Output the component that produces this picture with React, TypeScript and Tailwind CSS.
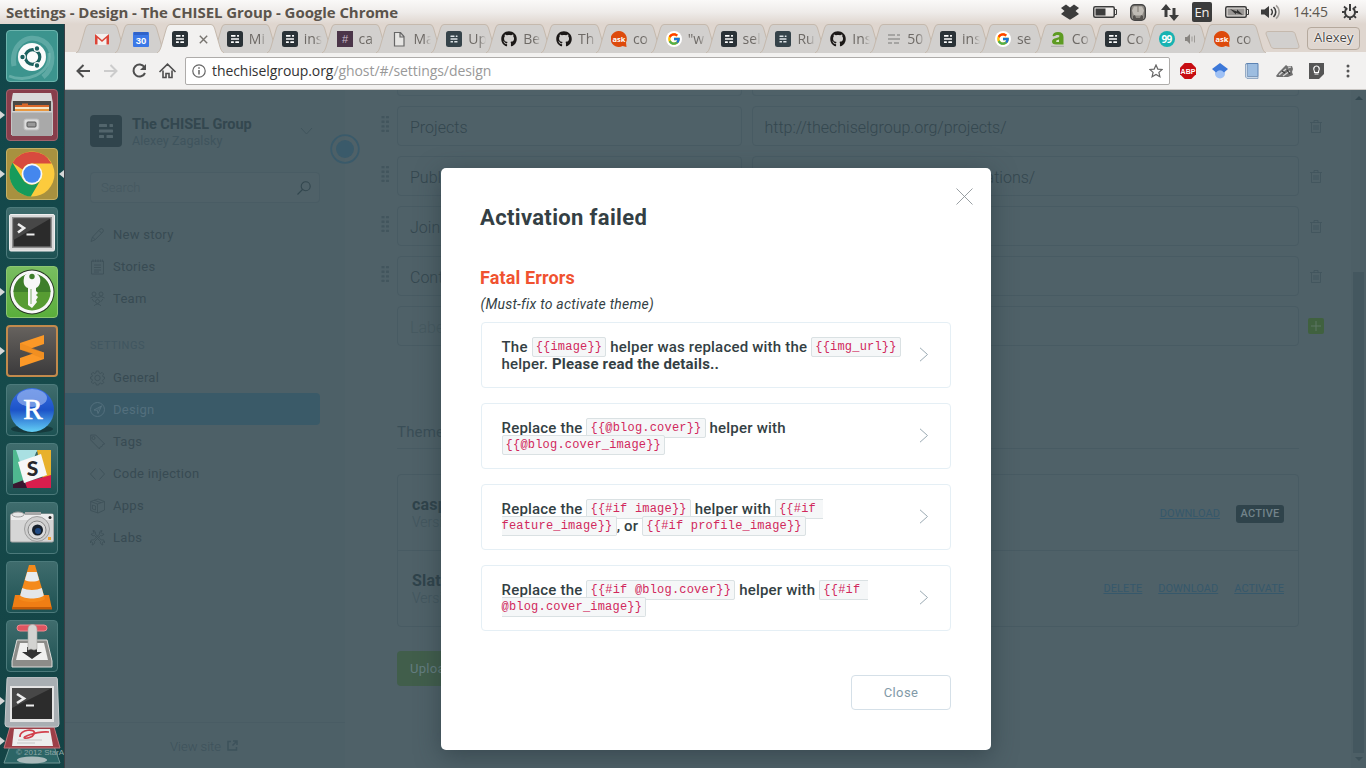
import React from 'react';
import { FaGithub } from 'react-icons/fa';
import { FcGoogle } from 'react-icons/fc';

type Kids = { children?: React.ReactNode };

/* ---------- Small shared glyphs ---------- */

function GhostMark({ size, bg, fg, r = 4, zoom = 1 }: { size: number; bg: string; fg: string; r?: number; zoom?: number }) {
  return (
    <svg width={size} height={size} viewBox="0 0 32 32">
      <rect width="32" height="32" rx={r} fill={bg} />
      <g fill={fg} transform={`translate(16 16) scale(${zoom}) translate(-16 -16)`}>
        <rect x="9" y="9" width="8" height="3" rx="0.6" />
        <rect x="19.5" y="9" width="3.5" height="3" rx="0.6" />
        <rect x="9" y="14.5" width="14" height="3" rx="0.6" />
        <rect x="9" y="20" width="5" height="3" rx="0.6" />
        <rect x="16.500" y="20" width="6.500" height="3" rx="0.6" />
      </g>
    </svg>
  );
}

/* ---------- System menu bar ---------- */

function SystemBar() {
  return (
    <header className="flex h-6 shrink-0 items-center justify-between bg-linear-to-b from-[#faf9f8] via-[#efecea] to-[#dfd6cf] pr-2 pl-1.5 font-['Open_Sans','Noto_Sans',sans-serif]">
      <h1 className="text-[15px] leading-6 font-bold tracking-[-0.07px] whitespace-nowrap text-[#5b544c]">
        Settings - Design - The CHISEL Group - Google Chrome
      </h1>
      <div className="flex items-center text-[#3c3c3c]">
        <svg width="18" height="16" viewBox="0 0 18 16" fill="#3c3c3c">
          <path d="M5 0.500 9 3.500 13 0.500 18 4 14.500 7 18 10 13.500 13 9 15.700 4.500 13 0 10 3.500 7 0 4z" />
        </svg>
        <svg className="ml-[14px]" width="24" height="12" viewBox="0 0 24 12">
          <rect x="0.750" y="0.750" width="20.500" height="10.500" rx="1.500" fill="none" stroke="#3c3c3c" strokeWidth="1.500" />
          <rect x="2.500" y="2.500" width="10" height="7" fill="#3c3c3c" />
          <path d="M22 3.500h1.500v5H22" fill="none" stroke="#3c3c3c" />
        </svg>
        <svg className="ml-[13px]" width="16" height="17" viewBox="0 0 16 17">
          <rect x="0.700" y="0.700" width="14.600" height="15.600" rx="4" fill="#8f8b85" stroke="#444" strokeWidth="1.400" />
          <path d="M4 2.500h8l2 4-2 5H4l-2-5z" fill="#bfbbb5" />
          <path d="M8 2v6" fill="none" stroke="#8b867f" strokeWidth="1.200" />
          <path d="M3 16v-4l2-1 1 3h4l1-3 2 1v4z" fill="#55524f" />
        </svg>
        <svg className="ml-[15px]" width="18" height="17" viewBox="0 0 18 17" fill="#3c3c3c">
          <path d="M5 0 10 6H6.500v7h-3V6H0zM13 17 8 11h3.500V4h3v7H18z" />
        </svg>
        <span className="ml-[13px] flex h-5 w-5 items-center justify-center rounded-[2px] bg-[#3c3c3c] text-[13px] leading-5 text-[#f3f0ed]">En</span>
        <svg className="ml-[13px]" width="24" height="12" viewBox="0 0 24 12">
          <rect x="0.750" y="0.750" width="20.500" height="10.500" rx="1.500" fill="#eeeae6" stroke="#3c3c3c" strokeWidth="1.500" />
          <rect x="2.500" y="2.500" width="17" height="7" fill="#9a9795" />
          <path d="M5 3 12 5.500V3.500l6 5.500-7-2v1.500z" fill="#333" />
          <path d="M22 3.500h1.500v5H22" fill="none" stroke="#3c3c3c" />
        </svg>
        <svg className="ml-[12px]" width="20" height="16" viewBox="0 0 20 16">
          <path d="M0 5.500h3.500L8 2v12l-4.500-3.500H0z" fill="#3c3c3c" />
          <path d="M10 5c1.700 1.700 1.700 4.300 0 6M12.500 3c3 2.700 3 7.300 0 10" fill="none" stroke="#3c3c3c" strokeWidth="1.600" />
          <path d="M15 1.300c4.200 3.500 4.200 9.900 0 13.400" fill="none" stroke="#a09c98" strokeWidth="1.500" />
        </svg>
        <span className="ml-[12px] w-9 text-[14px] leading-6 tracking-[-0.2px] text-[#5d5750]">14:45</span>
        <svg className="ml-[13px]" width="16" height="16" viewBox="0 0 16 16" fill="none" stroke="#3c3c3c">
          <path d="M5.300 4.200a5 5 0 1 0 5.400 0M8 0v7" strokeWidth="2" />
          <path d="M3.900 4.400 2 2.500M2.900 8H0M3.900 12 2 13.800M8 13.500V16M12.100 12l1.900 1.800M13.100 8H16M12.100 4.400 14 2.500" strokeWidth="1.800" />
        </svg>
      </div>
    </header>
  );
}

/* ---------- Launcher ---------- */

function Tile({ cls, children, left, right }: Kids & { cls: string; left?: boolean; right?: boolean }) {
  return (
    <li className="flex h-[52px] items-center">
      <span className="flex w-1.5">
        {left && <svg width="5" height="8" viewBox="0 0 5 8"><path d="M0 0 5 4 0 8z" fill="#d6d8d8" /></svg>}
      </span>
      <span className={`flex h-[52px] w-[52px] items-center justify-center overflow-hidden rounded-[4px] border ${cls}`}>
        {children}
      </span>
      <span className="flex w-1.5 justify-end">
        {right && <svg width="5" height="8" viewBox="0 0 5 8"><path d="M5 0 0 4l5 4z" fill="#d6d8d8" /></svg>}
      </span>
    </li>
  );
}

function TerminalIcon() {
  return (
    <svg width="46" height="38" viewBox="0 0 46 38">
      <rect x="0.500" y="0.500" width="45" height="36.500" rx="1.500" fill="#d9d9d9" stroke="#efefef" />
      <rect x="3" y="3" width="40" height="31" fill="#8d8d8d" />
      <rect x="4.500" y="4.500" width="37" height="28" fill="#2b2b2b" />
      <path d="M4.500 4.500h37L4.500 26z" fill="#474747" />
      <path d="M9 10l6 4-6 4.500" fill="none" stroke="#eee" strokeWidth="2.600" />
      <path d="M17.500 20.500h8" stroke="#eee" strokeWidth="2" />
    </svg>
  );
}

const glass = 'border-[#4c7a7b] bg-linear-to-b from-[#3f6c6d] to-[#1d5253]';

function Launcher() {
  return (
    <nav className="flex w-[65px] shrink-0 flex-col overflow-hidden border-r border-[#3b3f45] bg-linear-to-b from-[#12464a] via-[#164a4b] to-[#144345] pt-1.5">
      <ul className="flex flex-col gap-[7px]">
        <Tile cls="border-[#6db5ae] bg-[#3c948e]">
          <svg width="50" height="50" viewBox="0 0 50 50">
            <path d="M7 35C3 15 20 1 36 10c12 7 12 26 0 36" fill="none" stroke="#75b8b2" strokeWidth="5" opacity=".6" />
            <path d="M2 45C18 52 44 44 42 22" fill="none" stroke="#8cc5bf" strokeWidth="3" opacity=".5" />
            <circle cx="25" cy="26" r="14" fill="#fbfbfb" />
            <circle cx="25.500" cy="26" r="7.300" fill="none" stroke="#1c615f" strokeWidth="3.200" />
            <g fill="#1c615f" stroke="#fbfbfb" strokeWidth="1.200"><circle cx="15.500" cy="26" r="2.800" /><circle cx="30" cy="17.500" r="2.800" /><circle cx="30" cy="34.500" r="2.800" /></g>
          </svg>
        </Tile>
        <Tile left cls="border-[#a2636d] bg-[#883e4b]">
          <svg width="44" height="46" viewBox="0 0 44 46">
            <path d="M3 1h38l2 10v32H1V11z" fill="#c4c4c4" />
            <path d="M3 1h38l1 8H2z" fill="#dadada" />
            <rect x="3" y="9" width="38" height="14" fill="#4a4845" />
            <path d="M5 13h7v-1.500h6V13h21v10H5z" fill="#d9682a" />
            <path d="M5 15h34v2H5z" fill="#f5e6c8" /><path d="M5 17h34v2H5z" fill="#e9983f" />
            <path d="M2 19h40v25H2z" fill="#a9a9a9" /><path d="M2 19h40v1.500H2z" fill="#d2d2d2" />
            <rect x="14" y="27" width="15" height="11" rx="2" fill="#ddd" stroke="#bcbcbc" />
            <rect x="17" y="30" width="9" height="5" rx="1" fill="#999" stroke="#555" />
          </svg>
        </Tile>
        <Tile left right cls="border-[#c4b066] bg-[#a8913f]">
          <svg width="46" height="46" viewBox="0 0 46 46">
            <circle cx="23" cy="23" r="22.500" fill="#fccb3d" />
            <path d="M3.500 11.800A22.500 22.500 0 0 1 42.500 12.500H23a10.400 10.400 0 0 0-9.500 6z" fill="#d84a3e" />
            <path d="M3.500 11.800A22.500 22.500 0 0 0 21.800 45.500L32 28.300a10.400 10.400 0 0 1-18.500-.500z" fill="#179b5b" />
            <circle cx="23" cy="23" r="10.400" fill="#f6f8fb" />
            <circle cx="23" cy="23" r="8.700" fill="#4587ee" />
          </svg>
        </Tile>
        <Tile cls={glass}><TerminalIcon /></Tile>
        <Tile left cls="border-[#8cc671] bg-linear-to-b from-[#79bd60] to-[#5aae3b]">
          <svg width="46" height="46" viewBox="0 0 46 46">
            <circle cx="23" cy="23" r="22.500" fill="#263523" /><circle cx="23" cy="23" r="21.500" fill="#f8f8f8" />
            <circle cx="23" cy="23" r="18.500" fill="#579c32" /><path d="M4.500 23a18.500 18.500 0 0 1 37 0z" fill="#3e7e2a" />
            <path d="M15 9c0-4 5-5 5-5h6c5 2 6 6 5 10-1 3-2 4-4 5v3l2 2-2 2 2 2-2 3 1 2-5 6-4-3V19c-4-1-5-6-4-10z" fill="#f7f7f7" />
            <circle cx="23" cy="7.500" r="2.700" fill="#3e7e2a" /><path d="M22 20v15" stroke="#7fae6a" />
          </svg>
        </Tile>
        <Tile left cls="border-[#c28a4c] border-2 bg-linear-to-b from-[#66625e] to-[#3c3b3c]">
          <svg width="24" height="32" viewBox="0 0 24 32"><path d="M0 8 24 0v9L11 13.500l13 4V24L0 32v-9l13-4.500L0 14.500z" fill="#fb9827" /><path d="M0 14.500V8l24 9.500V24z" fill="#e8851c" opacity=".5" /></svg>
        </Tile>
        <Tile cls={glass}>
          <svg width="48" height="48" viewBox="0 0 48 48">
            <defs><linearGradient id="rball" x2="0" y2="1"><stop offset="0" stopColor="#3a6fe0" /><stop offset=".5" stopColor="#1c53c8" /><stop offset="1" stopColor="#63cff5" /></linearGradient></defs>
            <ellipse cx="24" cy="43" rx="21" ry="4" fill="#163a3d" />
            <circle cx="24" cy="24" r="22" fill="url(#rball)" /><ellipse cx="24" cy="12" rx="15" ry="9" fill="#9db9f0" opacity=".65" />
            <text x="25" y="33" textAnchor="middle" fontFamily="Liberation Serif, serif" fontSize="29" fill="#fff" stroke="#fff" strokeWidth=".6">R</text>
          </svg>
        </Tile>
        <Tile cls={glass}>
          <svg width="40" height="40" viewBox="0 0 40 40">
            <path d="M1 1h26l-13 9z" fill="#8ed9db" /><path d="M1 1h24l-3 8-15 4z" fill="#a9e0e2" /><path d="M25 1h14v27l-8 2z" fill="#e8b12c" />
            <path d="M1 1h3l12 36H1z" fill="#4fb890" /><path d="M39 26v13H12l2-6z" fill="#d91e4d" /><path d="M1 35l11-4 3 8H1z" fill="#3a1630" />
            <path d="M6 13 29 5l6 21-23 8z" fill="#f7f7f7" />
            <text x="20.500" y="27" textAnchor="middle" fontFamily="Lato, sans-serif" fontWeight="900" fontSize="21" fill="#28272b">S</text>
          </svg>
        </Tile>
        <Tile cls={glass}>
          <svg width="44" height="36" viewBox="0 0 44 36">
            <rect x="0.500" y="4" width="43" height="28" rx="1.500" fill="#d6d6d6" stroke="#a7a7a7" /><rect x="1" y="4" width="42" height="6" fill="#ececec" />
            <ellipse cx="8" cy="4.500" rx="6" ry="2.500" fill="#e6e6e6" stroke="#999" /><rect x="15" y="2" width="16" height="3" fill="#a8a8a8" />
            <circle cx="27" cy="19" r="12.500" fill="#cfcfcf" stroke="#9e9e9e" /><circle cx="27" cy="20" r="9" fill="#dadada" stroke="#888" />
            <circle cx="27.500" cy="20" r="5.500" fill="#16202c" /><circle cx="28" cy="21" r="3" fill="#214b85" />
            <rect x="38" y="27" width="3" height="3" fill="#f0a22e" /><circle cx="40" cy="7.500" r="1.500" fill="#222" />
          </svg>
        </Tile>
        <Tile cls={glass}>
          <svg width="42" height="46" viewBox="0 0 42 46">
            <path d="M4 31h34l3 14H1z" fill="#f07e14" /><path d="M1 43h40v2.500H1z" fill="#c45c08" />
            <path d="M18 1h6l10 34c-4 4-22 4-26 0z" fill="#f48a1b" />
            <path d="M16.200 8h9.600l2.400 8c-3 2-11 2-14.400 0z" fill="#e9ecee" /><path d="M11.200 24c5 2.500 14.500 2.500 19.600 0l2 7.500c-4 4-19.600 4-23.600 0z" fill="#e3e7ea" />
          </svg>
        </Tile>
        <Tile cls={glass}>
          <svg width="42" height="46" viewBox="0 0 42 46">
            <path d="M6 17h30l5 21v6H1v-6z" fill="#8c8c89" stroke="#dedddb" /><path d="M9 20h24l4 17H5z" fill="#f0f0ef" />
            <rect x="6" y="2" width="30" height="6" rx="3" fill="#df5560" stroke="#ef8990" />
            <path d="M16 24h10v5h5l-10 7-10-7h5z" fill="#333" />
            <path d="M17 6c0-6 9-6 9 0v20l-3 1-3-1-3 1z" fill="#d3d3d1" stroke="#a5a5a2" strokeWidth=".6" />
          </svg>
        </Tile>
      </ul>
      <svg className="mt-[5px] shrink-0" width="64" height="92" viewBox="0 0 64 92">
        <path d="M0 20 5 24 0 28zM0 60l5 4-5 4z" fill="#d6d8d8" />
        <path d="M10 69h44l6 17H4z" fill="#2c6566" stroke="#6f9695" /><ellipse cx="32" cy="83" rx="15" ry="3.500" fill="#a9babb" />
        <path d="M10 50h44l6 21H4z" fill="#9d3f47" stroke="#c2747b" />
        <path d="M14 52h36l3 17H12z" fill="#ededed" /><path d="M20 60c-1-8 17-9 14-3s-17 5-5 1 14-3 20-3" fill="none" stroke="#d2404c" strokeWidth="1.700" />
        <path d="M18 63h24M17 66h18" stroke="#c5c5c5" />
        <path d="M9 0h46q2 0 2.300 2L59 47q0 3-3 3H8q-3 0-3-3L7 2q0-2 2-2z" fill="#a9afb3" stroke="#c6cbcd" />
        <rect x="10" y="9" width="44" height="36" fill="#e4e4e4" /><rect x="12" y="11" width="40" height="31" fill="#2c2c2c" /><path d="M12 11h40L12 31z" fill="#474747" />
        <path d="M17 17l7 4.500-7 4.500" fill="none" stroke="#eee" strokeWidth="2.600" /><path d="M26 28.500h8" stroke="#eee" strokeWidth="2" />
        <text x="16" y="78" fontFamily="Liberation Sans, sans-serif" fontSize="8" fill="#8da5a7">© 2012 StarA</text>
      </svg>
    </nav>
  );
}

/* ---------- Browser tabs ---------- */

type Fav = 'gmail' | 'cal' | 'ghost' | 'ghost2' | 'hash' | 'file' | 'git' | 'ask' | 'google' | 'grey' | 'two' | 'nn';

function Favicon({ kind }: { kind: Fav }) {
  switch (kind) {
    case 'gmail':
      return <svg width="16" height="16" viewBox="0 0 16 16"><path d="M1 3h14v11H1z" fill="#f3f0ee" /><path d="M1 13.500V3l7 6 7-6v10.500h-2.500V7L8 11 3.500 7v6.500z" fill="#dc4437" /></svg>;
    case 'cal':
      return <svg width="16" height="16" viewBox="0 0 16 16"><rect y="1" width="16" height="15" rx="1" fill="#3b78e7" /><path d="M1 1h14v3H1z" fill="#2f62c9" /><text x="8" y="12.500" textAnchor="middle" fontFamily="Liberation Sans, sans-serif" fontWeight="700" fontSize="9.500" fill="#fff">30</text></svg>;
    case 'ghost':
      return <GhostMark size={16} bg="#2a3237" fg="#fff" r={5} zoom={1.15} />;
    case 'ghost2':
      return <GhostMark size={16} bg="#35434a" fg="#dfe5e8" r={5} />;
    case 'hash':
      return <svg width="16" height="16" viewBox="0 0 16 16"><rect width="16" height="16" fill="#4b3549" /><text x="8" y="12" textAnchor="middle" fontFamily="Liberation Sans, sans-serif" fontSize="11" fill="#c9bcc9">#</text></svg>;
    case 'file':
      return <svg width="16" height="16" viewBox="0 0 16 16"><path d="M3.500 1.500h6l3.500 4v9.500H3.500zM9 1.500V6h4" fill="#e6e5e3" stroke="#666" strokeWidth="1.200" /></svg>;
    case 'git':
      return <FaGithub size={16} color="#1b1817" />;
    case 'ask':
      return <svg width="16" height="16" viewBox="0 0 16 16"><path d="M8 0a8 8 0 1 0 3.500 15l4 1-.500-4.500A8 8 0 0 0 8 0z" fill="#dd4a0c" /><text x="8" y="10.600" textAnchor="middle" fontFamily="Open Sans, sans-serif" fontWeight="700" fontSize="7.500" fill="#fff">ask</text></svg>;
    case 'google':
      return <span className="flex h-4 w-4 items-center justify-center rounded-full bg-white"><FcGoogle size={14} /></span>;
    case 'grey':
      return <svg width="16" height="16" viewBox="0 0 16 16" fill="#a5a4a2"><path d="M3 3h7v2H3zM12 3h3v2h-3zM3 7h12v2H3zM3 11h4v2H3zM9 11h5v2H9z" /></svg>;
    case 'two':
      return <svg width="16" height="16" viewBox="0 0 16 16"><path d="M2.500 5Q3 1 8 1q5.500 0 5.500 5v7.500H6Q2 13.500 2 10.500T6.500 7Q9.500 6.500 9.500 5T6.500 4Q5 5.500 2.500 5z" fill="#5d9b22" /><path d="M6 10q0-1 3-1.500V11H7q-1 0-1-1z" fill="#d9e8c8" /><path d="M1 15.300h13" stroke="#aaa" /></svg>;
    case 'nn':
      return <svg width="16" height="16" viewBox="0 0 16 16"><circle cx="8" cy="8" r="8" fill="#17b3b2" /><text x="7.500" y="11.500" textAnchor="middle" fontFamily="Open Sans, sans-serif" fontWeight="700" fontSize="10" letterSpacing="-.8" fill="#fff">99</text></svg>;
  }
}

const tabs: { fav: Fav; label?: string; active?: boolean; sound?: boolean }[] = [
  { fav: 'ghost', active: true },
  { fav: 'ghost', label: 'Mi' },
  { fav: 'ghost', label: 'ins' },
  { fav: 'hash', label: 'ca' },
  { fav: 'file', label: 'Ma' },
  { fav: 'ghost2', label: 'Up' },
  { fav: 'git', label: 'Be' },
  { fav: 'git', label: 'Th' },
  { fav: 'ask', label: 'co' },
  { fav: 'google', label: '"w' },
  { fav: 'ghost', label: 'sel' },
  { fav: 'ghost2', label: 'Ru' },
  { fav: 'git', label: 'Ins' },
  { fav: 'grey', label: '50' },
  { fav: 'ghost', label: 'ins' },
  { fav: 'google', label: 'se' },
  { fav: 'two', label: 'Co' },
  { fav: 'ghost', label: 'Co' },
  { fav: 'nn', sound: true },
  { fav: 'ask', label: 'co' },
];

function TabShape({ w, active }: { w: number; active?: boolean }) {
  return (
    <svg className="absolute inset-0" width={w} height="29" viewBox={`0 0 ${w} 29`}>
      <path d={`M0 29C2 28 3 26 4 23L9.500 4Q10.500 0.500 13 .500H${w - 13}Q${w - 10.5} .500 ${w - 9.5} 4L${w - 4} 23C${w - 3} 26 ${w - 2} 28 ${w} 29`} fill={active ? '#f2f1f0' : '#d2d0ce'} stroke="#c5b9ad" />
    </svg>
  );
}

function TabStrip() {
  return (
    <div className="flex h-7 items-start bg-[#dfd6cf] pl-[11px] font-['Open_Sans','Noto_Sans',sans-serif]">
      {(['gmail', 'cal'] as Fav[]).map((f) => (
        <div key={f} className="relative -mr-3 flex h-7 w-[51px] shrink-0 items-center justify-center pt-0.5">
          <TabShape w={51} />
          <span className="relative"><Favicon kind={f} /></span>
        </div>
      ))}
      <div className="ml-[3px] flex">
        {tabs.map((t, i) => (
          <div key={i} className={`relative mr-[-12.15px] flex h-7 w-[67px] shrink-0 items-center pt-0.5 pl-[15px] ${t.active ? 'z-10' : ''}`}>
            <TabShape w={67} active={t.active} />
            <span className="relative flex h-4 w-4 shrink-0"><Favicon kind={t.fav} /></span>
            {t.active && (
              <svg className="relative ml-[11px]" width="9" height="9" viewBox="0 0 9 9"><path d="M.8.8l7.400 7.400M8.200.8.8 8.200" stroke="#77746f" strokeWidth="1.400" /></svg>
            )}
            {t.sound && (
              <svg className="relative ml-2.5" width="11" height="10" viewBox="0 0 11 10"><path d="M0 3h2l3-3v10L2 7H0z" fill="#888581" /><path d="M7 2.500v5M9.500 1.500v7" stroke="#9d9a96" /></svg>
            )}
            {t.label && (
              <span className="relative ml-1.5 w-[18px] overflow-hidden [mask-image:linear-gradient(to_right,#000_60%,transparent)] text-[14px] leading-5 whitespace-nowrap text-[#6e6a66]">{t.label}</span>
            )}
          </div>
        ))}
      </div>
      <svg className="mt-[7px] ml-[11px] shrink-0" width="35" height="18" viewBox="0 0 35 18"><path d="M3 .5h24q2 0 3 2l4 12.500q.5 2.500-2 2.500H9q-2 0-3-2L1 3Q.5.500 3 .500z" fill="#d2d0ce" stroke="#c5b9ad" /></svg>
      <div className="mt-[2.500px] ml-[7px] flex h-[23px] w-[53px] shrink-0 items-center justify-center rounded-[4px] border border-[#b5a99d] text-[13px] font-medium text-[#4a4744] [text-shadow:0_0_2px_#fff,0_0_2px_#fff,0_0_1px_#fff]">Alexey</div>
    </div>
  );
}

function Toolbar() {
  return (
    <div className="flex h-[38px] items-center border-b border-[#c9c6c3] bg-[#f2f1f0] pl-2.5">
      <svg width="106" height="18" viewBox="0 0 106 18" fill="none" strokeWidth="2">
        <path d="M15 9H3M8.500 3 2.500 9l6 6" stroke="#4e4e4e" />
        <path d="M29 9h12M35.500 3l6 6-6 6" stroke="#ccc" />
        <path d="M69.500 5.200A6 6 0 1 0 70 11" stroke="#4e4e4e" /><path d="M71 2v6h-6z" fill="#4e4e4e" stroke="none" />
        <path d="M88 8.500V15.500h3v-4h3v4h3V8.500M84.500 10 92.500 2.200l8 7.800" stroke="#4e4e4e" strokeWidth="1.600" />
      </svg>
      <div className="ml-1 flex h-7 w-[985px] items-center rounded-[2px] border border-[#aeacaa] bg-white pr-1.5 pl-1.5">
        <svg width="14" height="14" viewBox="0 0 14 14" fill="none" stroke="#666"><circle cx="7" cy="7" r="6.200" strokeWidth="1.200" /><path d="M7 6v4.500M7 3.200v1.500" strokeWidth="1.500" /></svg>
        <span className="ml-1.5 grow font-['Open_Sans','Noto_Sans',sans-serif] text-[14px] leading-6 tracking-[-0.07px] text-[#999]"><span className="text-[#333]">thechiselgroup.org</span>/ghost/#/settings/design</span>
        <svg width="14" height="14" viewBox="0 0 14 14"><path d="M7 1l1.800 4.100 4.400.4L9.900 8.400l1 4.300L7 10.400 3.100 12.700l1-4.300L.8 5.500l4.400-.4z" fill="none" stroke="#666" strokeWidth="1.200" /></svg>
      </div>
      <div className="ml-2.5 flex items-center gap-4">
        <svg width="16" height="16" viewBox="0 0 16 16"><path d="M4.700 0h6.600L16 4.700v6.600L11.300 16H4.700L0 11.300V4.700z" fill="#c70d12" /><text x="8" y="10.700" textAnchor="middle" fontFamily="Liberation Sans, sans-serif" fontWeight="700" fontSize="7" fill="#fff">ABP</text></svg>
        <svg width="16" height="16" viewBox="0 0 16 16"><circle cx="8" cy="10.500" r="5" fill="#9fc1f5" /><path d="M8 0 16 6l-4 3.500Q8 5 4 9.500L0 6z" fill="#3d78d8" /></svg>
        <svg width="16" height="16" viewBox="0 0 15 16"><path d="M2 .5h11.500v13H2z" fill="#9dbde0" stroke="#5c83b3" /><path d="M1 1v13l1.500 1.500h11v-2H3V1z" fill="#c9d8e8" stroke="#7592b5" strokeWidth=".7" /></svg>
        <svg width="17" height="14" viewBox="0 0 17 14"><path d="M0 12 3 8l5-5 2-2 2 1.500 4-.5 1 3-1 3 1 3-5 2H1z" fill="#6f6f6f" /><path d="M3 11l7-6M7 12l7-5M12 4l3-1" stroke="#d5d5d5" strokeWidth="1.300" /><path d="M6 7l3 2M11 6l3 4" stroke="#3a3a3a" strokeWidth="1.200" /></svg>
        <svg width="15" height="16" viewBox="0 0 15 16"><path d="M0 0h15v11l-5 5H0z" fill="#555" /><path d="M5.500 8.500c-2-3 0-5.500 2-5.500s4 2.500 2 5.500v1h-4zM5.500 11h4" fill="none" stroke="#fff" strokeWidth="1.200" /></svg>
        <svg width="16" height="16" viewBox="0 0 16 16" fill="#555"><circle cx="8" cy="3" r="1.500" /><circle cx="8" cy="8" r="1.500" /><circle cx="8" cy="13" r="1.500" /></svg>
      </div>
    </div>
  );
}

/* ---------- Ghost admin sidebar ---------- */

const icons: Record<string, React.ReactNode> = {
  'New story': <path d="M1 14.500 2.500 10 10 2.200Q11.500 1 12.800 2.200T12.800 5L5 12.800zM2.500 10 5 12.500M9 3.500l2.500 2.500" />,
  Stories: <path d="M1.500 2h12v13h-12zM4 6h7M4 8.500h7M4 11h7M4 13h5M3 .500V3M5.500 .500V3M8 .500V3M10.500 .500V3M12.500 .500V3" />,
  Team: <path d="M2 3a2 2 0 1 0 4 0 2 2 0 1 0-4 0M9 3a2 2 0 1 0 4 0 2 2 0 1 0-4 0M5.500 10.500a2 2 0 1 0 4 0 2 2 0 1 0-4 0M.5 7q3.500-3 7 0M7.500 7q3.500-3 7 0M4 14.800q3.500-3.500 7 0M2 8l2.500 3M13 8l-2.500 3" />,
  General: <path d="M6.300 1h2.400l.4 1.900 1.300.6L12.100 2.400l1.600 1.600-1.100 1.700.6 1.300 1.300.1v1.800l-1.300.6-.6 1.300 1.100 1.700-1.600 1.600-1.700-1.100-1.300.6L8.700 15H6.300l-.4-1.900-1.300-.6-1.700 1.100-1.600-1.600 1.100-1.700-.6-1.300-1.300-.3V7l1.300-.2.6-1.300L1.300 4l1.600-1.600 1.700 1.100 1.300-.6zM4.800 8a2.700 2.700 0 1 0 5.400 0 2.700 2.700 0 1 0-5.400 0" />,
  Design: <path d="M.5 7.500a7 7 0 1 0 14 0 7 7 0 1 0-14 0M11.500 4 4 8l3.200.3L8 11.500zM11.500 4 7.200 8.300" />,
  Tags: <path d="M.7 1h5l9 9-2 .5-.7 2-2 .5-.5 2-8.800-9zM3.500 2.500a1.500 1.500 0 1 0 0 3 1.500 1.500 0 1 0 0-3" />,
  'Code injection': <path d="M5.500 2.500 0.500 8l5 5.500M9.500 2.500l5 5.500-5 5.500" />,
  Apps: <path d="M.7 3.500 8 1l6.500 2.500v8.500L8 15 .7 12.500zM.7 3.500 7.500 6l7-2.500M7.500 6v9M4 2.200l7 2.500M2.500 7l3 1v4l-3-1z" />,
  Labs: <path d="M1 4c1 2 3 2 3.500 1.500l6 6C10 13 11 15 13 15l-1-2 2-1.500.8 1.500c0-3-2-3.500-3.500-3l-6-6C6 2.500 5 .5 3 .700L4 2.500 2.500 4zM14 4c-1 2-3 2-3.500 1.500l-6 6C5 13 4 15 2 15l1-2-2-1.500L.2 13c0-3 2-3.500 3.500-3l6-6C9 2.500 10 .5 12 .700L11 2.500 12.500 4z" />,
};

function NavItem({ name, active }: { name: string; active?: boolean }) {
  return (
    <li className={`flex h-8 w-[255px] items-center gap-2 rounded-r-[4px] pt-px pl-[25px] text-[13px] tracking-[0.28px] ${active ? 'bg-[#3a5a68] text-[#536f7d]' : 'text-[#384b53]'}`}>
      <svg width="15" height="16" viewBox="0 0 15 16" fill="none" stroke={active ? '#56727f' : '#3e5159'} strokeWidth="0.9">{icons[name]}</svg>
      <span className="pt-px">{name}</span>
    </li>
  );
}

function Sidebar() {
  return (
    <aside className="flex w-[280px] shrink-0 flex-col bg-[#4d6067]">
      <div className="flex h-[82px] items-start pt-[25px] pl-[25px]">
        <GhostMark size={32} bg="#30444c" fg="#52656c" />
        <div className="mt-px ml-2.5 w-[168px]">
          <p className="text-[14.500px] leading-[17px] font-bold tracking-[-0.05px] text-[#33474f]">The CHISEL Group</p>
          <p className="text-[12.500px] leading-4 tracking-[0.07px] text-[#3f545d]">Alexey Zagalsky</p>
        </div>
        <svg className="mt-3" width="13" height="8" viewBox="0 0 13 8"><path d="M1 1l5.500 6L12 1" fill="none" stroke="#41555d" /></svg>
      </div>
      <div className="ml-[25px] flex h-[31px] w-[230px] items-center justify-between rounded-[4px] border border-[#495c64] bg-[#4f6168] pr-2 pl-2.5">
        <span className="text-[13px] font-light text-[#455860]">Search</span>
        <svg width="14" height="14" viewBox="0 0 14 14" fill="none" stroke="#33474f" strokeWidth="1.100"><circle cx="8.700" cy="5.200" r="4.500" /><path d="M5.500 8.500.5 13.500" /></svg>
      </div>
      <ul className="mt-[15px] flex flex-col">
        <NavItem name="New story" /><NavItem name="Stories" /><NavItem name="Team" />
      </ul>
      <h2 className="mt-6 mb-[7px] ml-[25px] text-[11px] leading-4 tracking-[0.5px] text-[#405660]">SETTINGS</h2>
      <ul className="flex flex-col">
        <NavItem name="General" /><NavItem name="Design" active /><NavItem name="Tags" />
        <NavItem name="Code injection" /><NavItem name="Apps" /><NavItem name="Labs" />
      </ul>
      <div className="mt-auto flex h-[46px] items-center justify-center gap-1.5 border-t border-[#495c64] pt-0.5 pr-0.5 text-[13px] font-light text-[#3d525b]">
        View site
        <svg className="-mt-0.5" width="11" height="11" viewBox="0 0 11 11" fill="none" stroke="#3d525b" strokeWidth="1.500"><path d="M4 1.500H1v8.500h8.500V7M6 1h4v4M10 1 5.500 5.500" /></svg>
      </div>
    </aside>
  );
}

/* ---------- Design settings ---------- */

function Field({ children, wide, faint }: Kids & { wide?: boolean; faint?: boolean }) {
  return (
    <div className={`flex h-10 items-center rounded-[4px] border border-[#485b63] pt-[3px] text-[16px] font-light ${wide ? 'w-[547px] pl-[11.500px]' : 'mr-2.5 w-[345px] pl-3'} ${faint ? 'text-[#465960]' : 'text-[#34474f]'}`}>
      {children}
    </div>
  );
}

function Grip() {
  return (
    <svg className="-mt-1 mr-[7px] ml-px" width="9" height="18" viewBox="0 0 9 18" fill="#42555d">
      {[1, 5.6, 10.2, 14.8].map((y) => (<React.Fragment key={y}><rect x="0.500" y={y} width="3" height="2.300" rx=".5" /><rect x="5" y={y} width="3" height="2.300" rx=".5" /></React.Fragment>))}
    </svg>
  );
}

function Trash() {
  return <svg className="ml-[11px]" width="12" height="13" viewBox="0 0 12 13" fill="none" stroke="#42555d" strokeWidth=".9"><path d="M0 2.500h12M1.500 2.500v10h9v-10M4 2.500V.500h4v2M4 5v5M6 5v5M8 5v5" /></svg>;
}

const links = [
  ['Projects', 'http://thechiselgroup.org/projects/'],
  ['Publications', 'http://thechiselgroup.org/publications/'],
  ['Join Us', 'http://thechiselgroup.org/join/'],
  ['Contact', 'http://thechiselgroup.org/about/'],
];

function Main() {
  return (
    <main className="flex w-[1006px] shrink-0 flex-col bg-[#4f6168] pl-[35px]">
      <div className="ml-[17px] flex h-1.5 gap-2.5">
        <div className="w-[345px] rounded-b-[4px] border border-t-0 border-[#495c64]" />
        <div className="w-[547px] rounded-b-[4px] border border-t-0 border-[#495c64]" />
      </div>
      <div className="mt-2.5 flex flex-col gap-2.5">
        {links.map(([label, url]) => (
          <div key={label} className="flex items-center"><Grip /><Field>{label}</Field><Field wide>{url}</Field><Trash /></div>
        ))}
        <div className="flex items-center pl-[17px]">
          <Field faint>Label</Field><Field wide faint>http://thechiselgroup.org/</Field>
          <span className="ml-[9px] flex h-4 w-4 items-center justify-center rounded-[2px] bg-[#40613f]">
            <svg width="10" height="10" viewBox="0 0 10 10"><path d="M5 0v10M0 5h10" stroke="#5c7664" /></svg>
          </span>
        </div>
      </div>
      <h2 className="mt-[73px] ml-[17px] flex h-[30px] w-[902px] items-center border-b border-[#485b63] pb-0.5 text-[15px] tracking-[0.2px] text-[#3a4e57]">Themes</h2>
      <div className="mt-[25px] ml-[17px] flex h-[153px] w-[902px] shrink-0 flex-col rounded-[4px] border border-[#485b63]">
        <div className="flex h-[76px] items-center justify-between border-b border-[#485b63] pt-0.5 pr-3.5 pl-3.5">
          <div className="text-[#42565e]"><p className="text-[16px] leading-[18px] font-bold tracking-[0.2px] text-[#2f434b]">casper</p><p className="text-[14px] leading-[17px] font-light">Version 1.3.7</p></div>
          <div className="flex items-center text-[11px] tracking-[0.05px] text-[#36586b]"><u className="pt-0.5">DOWNLOAD</u><b className="ml-4 flex h-[18px] w-12 items-center justify-center rounded-[3px] bg-[#2f434b] pt-px text-[11px] font-medium tracking-[0.3px] text-[#72838a]">ACTIVE</b></div>
        </div>
        <div className="flex h-[75px] items-center justify-between pt-0.5 pr-3.5 pl-3.5">
          <div className="text-[#42565e]"><p className="text-[16px] leading-[18px] font-bold tracking-[0.2px] text-[#2f434b]">Slate</p><p className="text-[14px] leading-[17px] font-light">Version 0.0.1</p></div>
          <div className="flex items-center gap-4 text-[11px] tracking-[0.02px] text-[#36586b]"><u>DELETE</u><u>DOWNLOAD</u><u>ACTIVATE</u></div>
        </div>
      </div>
      <button className="mt-6 ml-[17px] flex h-[35px] w-[120px] items-center rounded-[4px] bg-[#415e4b] pl-[13px] text-[13px] tracking-[0.3px] text-[#647d80]">Upload a theme</button>
    </main>
  );
}

/* ---------- Dialog ---------- */

function Code({ children }: Kids) {
  return <code className="relative -top-px rounded-[2px] border border-[#dae1e3] bg-[#f5f7f8] px-[3.100px] py-[2px] align-[1px] font-['Liberation_Mono',monospace] text-[12px] leading-none font-normal break-normal whitespace-break-spaces text-[#d1285c]">{children}</code>;
}

function Issue({ children }: Kids) {
  return (
    <li className="flex h-[66px] items-center justify-between rounded-[4px] border border-[#e5eff5] pr-[21px] pl-[19.500px]">
      <p className="w-[404px] pt-0.5 text-[15px] leading-[17px] font-medium tracking-[0.2px] text-[#343f44]">{children}</p>
      <svg className="-mt-0.5" width="10" height="15" viewBox="0 0 10 15"><path d="M1 .8 8.500 7.500 1 14.200" fill="none" stroke="#9aa9b2" /></svg>
    </li>
  );
}

function Dialog() {
  return (
    <section className="absolute top-[78px] left-[376px] flex h-[582px] w-[550px] flex-col rounded-[5px] bg-white pr-10 pl-10 shadow-[0_6px_24px_rgba(38,52,60,0.55)]">
      <svg className="absolute top-[19.500px] right-[18.500px]" width="17" height="17" viewBox="0 0 17 17"><path d="M.5.500l16 16M16.500.500l-16 16" stroke="#8d9499" strokeWidth=".9" /></svg>
      <h2 className="mt-9 -ml-px text-[22px] leading-7 font-bold tracking-[0.35px] text-[#343f44]">Activation failed</h2>
      <h3 className="mt-[34px] -ml-px text-[18px] leading-6 font-bold tracking-[0.15px] text-[#f05230]">Fatal Errors</h3>
      <p className="mt-[3px] -ml-[0.500px] text-[14px] leading-[22px] tracking-[0.23px] text-[#343f44] italic">(Must-fix to activate theme)</p>
      <ul className="mt-[7px] flex flex-col gap-[15px]">
        <Issue>The <Code>{'{{image}}'}</Code> helper was replaced with the <Code>{'{{img_url}}'}</Code> helper. <b>Please read the details..</b></Issue>
        <Issue>Replace the <Code>{'{{@blog.cover}}'}</Code> helper with <Code>{'{{@blog.cover_image}}'}</Code></Issue>
        <Issue>Replace the <Code>{'{{#if image}}'}</Code> helper with <Code>{'{{#if feature_image}}'}</Code>, or <Code>{'{{#if profile_image}}'}</Code></Issue>
        <Issue>Replace the <Code>{'{{#if @blog.cover}}'}</Code> helper with <Code>{'{{#if @blog.cover_image}}'}</Code></Issue>
      </ul>
      <button className="mt-11 flex h-[35px] w-[100px] items-center justify-center self-end rounded-[4px] border border-[#d5e0e8] text-[13px] tracking-[0.4px] text-[#829aa8]">Close</button>
    </section>
  );
}

export default function App() {
  return (
    <div className="flex h-[768px] w-[1366px] flex-col overflow-hidden bg-[#dfd6cf]">
      <SystemBar />
      <div className="flex min-h-0 grow">
        <Launcher />
        <div className="flex w-[1301px] flex-col">
          <TabStrip />
          <Toolbar />
          <div className="relative flex min-h-0 grow overflow-hidden font-['Roboto',sans-serif]">
            <Sidebar />
            <Main />
            <div className="flex w-[15px] shrink-0 flex-col items-center bg-[#4d5f66]">
              <svg className="mt-1.5" width="8" height="4" viewBox="0 0 8 4"><path d="M0 4 4 0l4 4z" fill="#344850" /></svg>
              <div className="mt-[172px] h-[481px] w-[11px] bg-[#44575f]" />
              <svg className="mt-1" width="8" height="4" viewBox="0 0 8 4"><path d="M0 0l4 4 4-4z" fill="#3d5058" /></svg>
            </div>
            <svg className="absolute top-[44px] left-[265px]" width="30" height="30" viewBox="0 0 30 30"><circle cx="15" cy="15" r="13.800" fill="none" stroke="#3a5a6a" strokeWidth="1.800" /><circle cx="15" cy="15" r="9" fill="#3a5a6a" /></svg>
            <Dialog />
          </div>
        </div>
      </div>
    </div>
  );
}
